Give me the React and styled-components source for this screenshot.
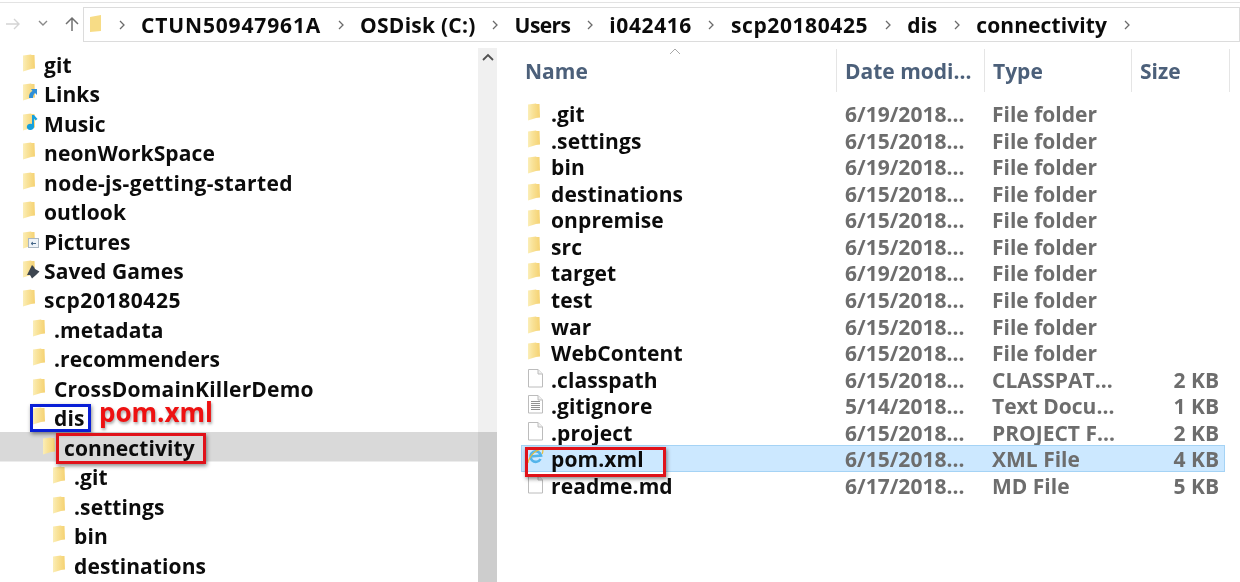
import React from "react";
import styled, { createGlobalStyle } from "styled-components";

const Global = createGlobalStyle`
  html, body { margin: 0; padding: 0; background: #fff; }
  * { box-sizing: border-box; }
  body { font-family: "Open Sans", "Noto Sans", sans-serif; -webkit-font-smoothing: antialiased; }
`;

const Page = styled.div`
  position: relative; width: 1240px; height: 582px; overflow: hidden; background: #fff;
  display: flex; flex-direction: column; filter: blur(0.35px);
`;
const Toolbar = styled.div`
  height: 41px; flex: none; margin-top: 2px; display: flex; align-items: flex-start; padding-top: 4px;
  border-top: 1px solid #e3e3e3;
`;
const NavIcons = styled.div`
  width: 83px; flex: none; height: 35px; display: flex; align-items: center; padding: 0 0 2px 5px; gap: 17px;
`;
const AddressBar = styled.div`
  flex: 1; height: 35px; border: 1px solid #dcdcdc; display: flex; align-items: center; padding-left: 5px;
  font-size: 21px; font-weight: 700; color: #0b0b0b; white-space: nowrap;
`;
const Crumb = styled.span` letter-spacing: ${p => p.$ls || 0}px; `;
const Chevron = styled.svg` width: 8px; height: 12px; flex: none; margin: 0 ${p => p.$m}px; `;
const Body = styled.div` flex: 1; display: flex; min-height: 0; `;
const Tree = styled.div` width: 478px; flex: none; padding-top: 7px; display: flex; flex-direction: column; `;
const TreeRow = styled.div`
  height: 29.47px; flex: none; display: flex; align-items: center; line-height: 22px;
  padding-left: ${p => p.$indent}px; font-size: 21px; font-weight: 700; color: #0c0c0c;
  letter-spacing: ${p => p.$ls || 0.1}px; white-space: nowrap;
  ${p => p.$sel && `
    background: linear-gradient(#d9d9d9, #d9d9d9) no-repeat 0 0 / 100% 28.5px;
    box-shadow: 0 -1px 0 #d9d9d9;
  `}
`;
const Scroll = styled.div`
  width: 19px; flex: none; background: #f0f0f0; margin-top: 5px; display: flex; flex-direction: column; align-items: center;
`;
const ScrollArrow = styled.svg` width: 14px; height: 10px; margin-top: 4px; flex: none; `;
const Thumb = styled.div` width: 19px; flex: 1; margin-top: 370px; background: #cdcdcd; `;
const List = styled.div` flex: 1; display: flex; flex-direction: column; position: relative; min-width: 0; `;
const Head = styled.div`
  height: 50px; flex: none; display: grid; grid-template-columns: 316px 148px 147px 98px; padding-left: 24px; padding-top: 6px;
  font-size: 21px; font-weight: 700; color: #4c607a;
`;
const HeadCell = styled.div`
  height: 43px; padding-left: ${p => p.$pad || 8}px; display: flex; align-items: center;
  border-right: 1px solid #e5e5e5; white-space: nowrap;
`;
const SortCaret = styled.svg` position: absolute; left: 172px; top: 5px; width: 12px; height: 7px; `;
const FileRows = styled.div` display: flex; flex-direction: column; padding-top: 7px; padding-left: 24px; `;
const FileRow = styled.div`
  height: 26.57px; flex: none; display: grid; grid-template-columns: 324px 147px 147px 80px; align-items: center;
  margin-right: 15px; font-size: 21px; font-weight: 700;
  background: ${p => (p.$sel ? "#cce8ff" : "transparent")};
  box-shadow: ${p => (p.$sel ? "inset 0 0 0 1px #a5d3f5" : "none")};
`;
const NameCell = styled.div` display: flex; align-items: center; gap: 2px; padding-left: 6px; color: #0c0c0c; white-space: nowrap; letter-spacing: 0.1px; `;
const Meta = styled.div` color: #6d6d6d; white-space: nowrap; `;
const SizeCell = styled(Meta)` text-align: right; `;
const Mark = styled.div`
  position: absolute; border: 3px solid ${p => p.$c}; left: ${p => p.$x}px; top: ${p => p.$y}px;
  width: ${p => p.$w}px; height: ${p => p.$h}px; box-shadow: 1px 2px 4px rgba(0,0,0,.45);
`;
const Label = styled.div`
  position: absolute; left: 99px; top: 402px; font-size: 26px; font-weight: 700; line-height: 20px; color: #ee1111;
  text-shadow: 1px 2px 3px rgba(0,0,0,.35);
`;

const IconBox = styled.svg` width: 22px; height: 22px; flex: none; display: block; `;

const FolderShape = () => (
  <>
    <defs>
      <linearGradient id="fg" x1="0" x2="1" y1="0" y2="0">
        <stop offset="0" stopColor="#fbeeb8" />
        <stop offset="0.35" stopColor="#f9e39a" />
        <stop offset="1" stopColor="#f5d272" />
      </linearGradient>
    </defs>
    <path d="M1 1.5 L9 0.5 L9.5 1 L12.5 1 L13 14.5 L9 15 L1 17.5 Z" fill="url(#fg)" />
  </>
);
const Folder = ({ over }) => (
  <IconBox viewBox="0 0 22 22">
    <FolderShape />
    {over === "link" && <path d="M7 15 C7 11 8 9 10.5 8 L9 6 L15 6 L15 12 L13 10 C11.5 11 11 13 11 15 Z" fill="#2f8fd8" />}
    {over === "music" && <path d="M10 2 H12 V13.5 A3.6 3.2 0 1 1 10 11 Z M12 2 L15.5 6 L13.5 7.5 L12 5.5 Z" fill="#17a0dc" />}
    {over === "pic" && (
      <>
        <rect x="6.5" y="7.5" width="10" height="9" fill="#eef3f8" stroke="#a9b6c2" />
        <path d="M9 12.5 H14 M9 12.5 L11 11 M9 12.5 L11 14" stroke="#47688a" strokeWidth="1" fill="none" />
      </>
    )}
    {over === "game" && <path d="M5 15 L10 5 L12 7 L13 9 L17.5 11.5 L14 15 L10 18.5 L8 15 Z" fill="#3d4650" />}
  </IconBox>
);
const Doc = ({ lines }) => (
  <IconBox viewBox="0 0 22 22">
    <path d="M1.5 0.5 H11 L15.5 5 V18 H1.5 Z" fill="#fff" stroke="#bcbcbc" />
    <path d="M11 0.5 V5 H15.5" fill="#f0f0f0" stroke="#bcbcbc" />
    {lines && [6, 8, 10, 12, 14].map(y => <path key={y} d={`M4 ${y}.5 H13`} stroke="#929292" />)}
  </IconBox>
);
const IE = () => (
  <IconBox viewBox="0 0 22 22">
    <path d="M13.5 11 A5.3 5.3 0 1 1 14 7.5 L3.5 8.5" fill="none" stroke="#53b4ea" strokeWidth="2.6" />
    <path d="M1 15 C2 8 10 0 15.5 1.5 C16.5 3 15.5 5 15 6" fill="none" stroke="#e8bd3a" strokeWidth="1.2" />
  </IconBox>
);
const Chev = ({ m }) => (
  <Chevron $m={m} viewBox="0 0 8 12"><path d="M2 2 L6 6 L2 10" fill="none" stroke="#6b6b6b" strokeWidth="1.3" /></Chevron>
);

const tree = [
  ["git", 22], ["Links", 22, "link"], ["Music", 22, "music"], ["neonWorkSpace", 22], ["node-js-getting-started", 22, null, 0.35],
  ["outlook", 22], ["Pictures", 22, "pic"], ["Saved Games", 22, "game"], ["scp20180425", 22, null, 0.6], [".metadata", 32],
  [".recommenders", 32], ["CrossDomainKillerDemo", 32, null, 0.2], ["dis", 32], ["connectivity", 42], [".git", 52],
  [".settings", 52], ["bin", 52], ["destinations", 52],
];
const files = [
  [".git", "6/19/2018...", "File folder", ""], [".settings", "6/15/2018...", "File folder", ""],
  ["bin", "6/19/2018...", "File folder", ""], ["destinations", "6/15/2018...", "File folder", ""],
  ["onpremise", "6/15/2018...", "File folder", ""], ["src", "6/15/2018...", "File folder", ""],
  ["target", "6/19/2018...", "File folder", ""], ["test", "6/15/2018...", "File folder", ""],
  ["war", "6/15/2018...", "File folder", ""], ["WebContent", "6/15/2018...", "File folder", ""],
  [".classpath", "6/15/2018...", "CLASSPAT...", "2 KB", "doc"], [".gitignore", "5/14/2018...", "Text Docu...", "1 KB", "lines"],
  [".project", "6/15/2018...", "PROJECT F...", "2 KB", "doc"], ["pom.xml", "6/15/2018...", "XML File", "4 KB", "ie"],
  ["readme.md", "6/17/2018...", "MD File", "5 KB", "doc"],
];
const crumbs = [
  ["CTUN50947961A", 0.85], ["OSDisk (C:)", 0.25], ["Users", -0.6], ["i042416", 0.6],
  ["scp20180425", 0.6], ["dis", 0], ["connectivity", 0.1],
];

export default function App() {
  return (
    <Page>
      <Global />
      <Toolbar>
        <NavIcons>
          <svg width="16" height="14" viewBox="0 0 16 14"><path d="M1 7 H14 M9 2 L14 7 L9 12" fill="none" stroke="#d4d4d4" strokeWidth="1.4" /></svg>
          <svg width="10" height="7" viewBox="0 0 10 7"><path d="M1 1 L5 5 L9 1" fill="none" stroke="#8a8a8a" strokeWidth="1.4" /></svg>
          <svg width="14" height="16" viewBox="0 0 14 16"><path d="M7 15 V2 M1 8 L7 2 L13 8" fill="none" stroke="#707070" strokeWidth="1.5" /></svg>
        </NavIcons>
        <AddressBar>
          <svg width="14" height="22" viewBox="0 0 14 22"><path d="M1 3 L12 1 L12 17 L1 18 Z" fill="#f7dc86" /></svg>
          <Chev m={15} />
          {crumbs.map(([c, ls]) => (
            <React.Fragment key={c}>
              <Crumb $ls={ls}>{c}</Crumb>
              <Chev m={15.5} />
            </React.Fragment>
          ))}
        </AddressBar>
      </Toolbar>
      <Body>
        <Tree>
          {tree.map(([n, ind, over, ls]) => (
            <TreeRow key={n + ind} $indent={ind} $ls={ls} $sel={n === "connectivity"}>
              <Folder over={over} />
              <span>{n}</span>
            </TreeRow>
          ))}
        </Tree>
        <Scroll>
          <ScrollArrow viewBox="0 0 14 10"><path d="M2 8 L7 3 L12 8" fill="none" stroke="#505050" strokeWidth="1.8" /></ScrollArrow>
          <Thumb />
        </Scroll>
        <List>
          <SortCaret viewBox="0 0 12 7"><path d="M1 6 L6 1 L11 6" fill="none" stroke="#a8a8a8" /></SortCaret>
          <Head>
            <HeadCell $pad={4}>Name</HeadCell>
            <HeadCell>Date modi...</HeadCell>
            <HeadCell>Type</HeadCell>
            <HeadCell>Size</HeadCell>
          </Head>
          <FileRows>
            {files.map(([n, d, t, s, k]) => (
              <FileRow key={n} $sel={n === "pom.xml"}>
                <NameCell>
                  {k === "ie" ? <IE /> : k === "doc" ? <Doc /> : k === "lines" ? <Doc lines /> : <Folder />}
                  <span>{n}</span>
                </NameCell>
                <Meta>{d}</Meta>
                <Meta>{t}</Meta>
                <SizeCell>{s}</SizeCell>
              </FileRow>
            ))}
          </FileRows>
        </List>
      </Body>
      <Mark $c="#0a1fd6" $x={30} $y={404} $w={61} $h={28} />
      <Mark $c="#e0121a" $x={56} $y={433} $w={150} $h={31} />
      <Mark $c="#e0121a" $x={525} $y={447} $w={141} $h={30} />
      <Label>pom.xml</Label>
    </Page>
  );
}
